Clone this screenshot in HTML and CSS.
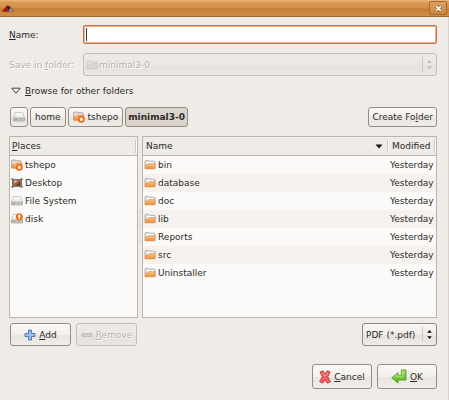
FILE: index.html
```html
<!DOCTYPE html>
<html lang="en">
<head>
<meta charset="utf-8">
<title>Save dialog</title>
<link rel="stylesheet" href="styles.css">
</head>
<body>
<svg class="defs" aria-hidden="true">
  <defs>
    <linearGradient id="orange" x1="0" y1="0" x2="0" y2="1"><stop offset="0" stop-color="#fcc590"/><stop offset="1" stop-color="#f28a2c"/></linearGradient>
    <linearGradient id="metal" x1="0" y1="0" x2="0" y2="1"><stop offset="0" stop-color="#fcfcfa"/><stop offset="1" stop-color="#e0e0db"/></linearGradient>
    <linearGradient id="green" x1="0" y1="0" x2="0" y2="1"><stop offset="0" stop-color="#a5e36a"/><stop offset="1" stop-color="#55ad1c"/></linearGradient>
    <symbol id="folder" viewBox="0 0 12 12">
      <path d="M1 9.500V2.500Q1 1.500 2 1.500H4.500L5.500 2.200H10Q11 2.200 11 3.200V9.500Z" fill="#e6e1dc" stroke="#aaa29b" stroke-width=".8"/>
      <path d="M2.500 3.500H10" stroke="#fff" stroke-width="1"/>
      <path d="M1 9.800L1.800 6H4.500L5.500 4.700H11.300L10.900 9.800Z" fill="url(#orange)" stroke="#dc9355" stroke-width=".7"/>
    </symbol>
    <symbol id="home" viewBox="0 0 12 12">
      <path d="M.6 8.500V2Q.6 1 1.600 1H4L5 1.700H9.500Q10.500 1.700 10.500 2.700V8.500Z" fill="#e6dbd2" stroke="#a8978b" stroke-width=".8"/>
      <path d="M.6 9.200L1.500 5.600H4L5 4.300H11L10.500 9.200Z" fill="url(#orange)" stroke="#d98743" stroke-width=".7"/>
      <circle cx="8.300" cy="8.200" r="3.500" fill="#f4690e"/>
      <path d="M6.300 8.300L8.300 6.300L10.300 8.300H9.600V9.700H7V8.300Z" fill="#fff"/>
    </symbol>
    <symbol id="drive" viewBox="0 0 12 12">
      <path d="M2.300 1.500H9.700L11.500 7V9.500H.5V7Z" fill="url(#metal)" stroke="#b7b7b2" stroke-width=".7"/>
      <path d="M.6 7H11.400V10H.6Z" fill="#d0d1cd" stroke="#9c9c97" stroke-width=".7"/>
      <path d="M2 8.500H4" stroke="#6fba3d" stroke-width="1"/>
      <path d="M6 8.500H10" stroke="#aaa" stroke-width=".7"/>
    </symbol>
    <symbol id="disk" viewBox="0 0 12 12">
      <use href="#drive"/>
      <circle cx="8.300" cy="3.700" r="3.500" fill="#f4690e"/>
      <path d="M8.300 1.300L10.300 3.500H9V6H7.600V3.500H6.300Z" fill="#fff"/>
    </symbol>
    <symbol id="desktop" viewBox="0 0 12 12">
      <path d="M1.500 2.500H10.500V9.500H1.500Z" fill="#8a6a5a" stroke="#77726e"/>
      <path d="M.3 1.200H2.500V3H.3ZM9.500 1.200H11.700V3H9.500ZM.3 9H2.500V10.800H.3ZM9.500 9H11.700V10.800H9.500Z" fill="#77736f"/>
      <path d="M3 3.500H9V8.500H3Z" fill="#a8633c"/>
      <path d="M3 3.500H7L3 6.500Z" fill="#e0c0a8"/>
      <path d="M5 8.500L9 5V8.500Z" fill="#6c2f1c"/>
    </symbol>
  </defs>
</svg>
<div class="dialog">
  <header class="titlebar">
    <svg class="logo" viewBox="0 0 12 7" aria-hidden="true"><path d="M0 6.500L5 .5L8 1.500L12 6.500Z" fill="#3a2019"/><path d="M.8 6.200L5 1.300L6.800 6.200Z" fill="#c90c0c"/><path d="M6.500 6.500L8.300 2.500L11.500 6.500Z" fill="#9599a2"/></svg>
    <button class="close" type="button" aria-label="Close"><svg viewBox="0 0 8 8" aria-hidden="true"><path d="M1.500 1.500L6.500 6.500M6.500 1.500L1.500 6.500" stroke="#79501f" stroke-width="3.400"/><path d="M1.500 1.500L6.500 6.500M6.500 1.500L1.500 6.500" stroke="#fff" stroke-width="2"/></svg></button>
  </header>
  <form class="content">
    <div class="fields">
      <label for="name"><u>N</u>ame:</label>
      <input id="name" class="name" type="text" autofocus>
      <label for="folder-select" class="off">Save in <u>f</u>older:</label>
      <div class="combo off">
        <svg class="lead" aria-hidden="true" viewBox="0 0 12 12"><path d="M1 9.500V2H5L6 3H11V9.500Z" fill="#e5e1dc" stroke="#c9c4be" stroke-width=".8"/><path d="M1 9.500L2 6H4.500L5.500 4.700H11.300L11 9.500Z" fill="#dad6d1" stroke="#c9c4be" stroke-width=".7"/></svg>
        <select id="folder-select" disabled><option>minimal3-0</option></select>
        <svg class="arrows" viewBox="0 0 6 10" aria-hidden="true"><path d="M1 3.500L3 1L5 3.500ZM1 6.500L3 9L5 6.500Z" fill="currentColor"/></svg>
      </div>
    </div>
    <button class="expander" type="button"><svg viewBox="0 0 10 8" aria-hidden="true"><path d="M.8 1.200H9.200L5 6.200Z" fill="#fff" stroke="#3f3d3b"/></svg><span><u>B</u>rowse for other folders</span></button>
    <nav class="path">
      <button class="btn drive" type="button" aria-label="File System"><svg class="icon" aria-hidden="true"><use href="#drive"/></svg></button>
      <button class="btn" type="button">home</button>
      <button class="btn" type="button"><svg class="icon" aria-hidden="true"><use href="#home"/></svg>tshepo</button>
      <button class="btn current" type="button">minimal3-0</button>
      <button class="btn create" type="button"><span>Create Fo<u>l</u>der</span></button>
    </nav>
    <div class="panes">
      <section class="pane places">
        <h2 class="head"><span><u>P</u>laces</span></h2>
        <ul>
          <li><svg class="icon" aria-hidden="true"><use href="#home"/></svg>tshepo</li>
          <li><svg class="icon" aria-hidden="true"><use href="#desktop"/></svg>Desktop</li>
          <li><svg class="icon" aria-hidden="true"><use href="#drive"/></svg>File System</li>
          <li><svg class="icon" aria-hidden="true"><use href="#disk"/></svg>disk</li>
        </ul>
      </section>
      <div class="grip"></div>
      <section class="pane files">
        <table>
          <thead><tr>
            <th scope="col"><div class="head sort">Name<svg viewBox="0 0 8 5" aria-hidden="true"><path d="M.5 .5H7.500L4 4.500Z" fill="#111"/></svg></div></th>
            <th scope="col" class="when"><div class="head">Modified</div></th>
          </tr></thead>
          <tbody>
            <tr><td><div class="cell"><svg class="icon" aria-hidden="true"><use href="#folder"/></svg>bin</div></td><td>Yesterday</td></tr>
            <tr><td><div class="cell"><svg class="icon" aria-hidden="true"><use href="#folder"/></svg>database</div></td><td>Yesterday</td></tr>
            <tr><td><div class="cell"><svg class="icon" aria-hidden="true"><use href="#folder"/></svg>doc</div></td><td>Yesterday</td></tr>
            <tr><td><div class="cell"><svg class="icon" aria-hidden="true"><use href="#folder"/></svg>lib</div></td><td>Yesterday</td></tr>
            <tr><td><div class="cell"><svg class="icon" aria-hidden="true"><use href="#folder"/></svg>Reports</div></td><td>Yesterday</td></tr>
            <tr><td><div class="cell"><svg class="icon" aria-hidden="true"><use href="#folder"/></svg>src</div></td><td>Yesterday</td></tr>
            <tr><td><div class="cell"><svg class="icon" aria-hidden="true"><use href="#folder"/></svg>Uninstaller</div></td><td>Yesterday</td></tr>
          </tbody>
        </table>
      </section>
    </div>
    <div class="tools">
      <button class="btn" type="button"><svg class="icon" viewBox="0 0 12 12" aria-hidden="true"><path d="M4.500 1H7.500V4.500H11V7.500H7.500V11H4.500V7.500H1V4.500H4.500Z" fill="#9dc0e6" stroke="#4a7ab4" stroke-linejoin="round"/></svg><span><u>A</u>dd</span></button>
      <button class="btn off" type="button" disabled><svg class="icon" viewBox="0 0 12 12" aria-hidden="true"><path d="M1 4.500H11V7.500H1Z" fill="#d3cfca" stroke="#bdb8b2" stroke-width=".8"/></svg><span><u>R</u>emove</span></button>
      <div class="combo type">
        <select aria-label="File type"><option>PDF (*.pdf)</option></select>
        <svg class="arrows" viewBox="0 0 6 10" aria-hidden="true"><path d="M1 3.500L3 1L5 3.500ZM1 6.500L3 9L5 6.500Z" fill="currentColor"/></svg>
      </div>
    </div>
    <div class="actions">
      <button class="btn" type="button"><svg class="cross" viewBox="0 0 12 14" aria-hidden="true"><path d="M1 2L4 .8L6 3.800L8.300 .8L11.200 2L8.800 6.800L11.500 11.800L8.300 13.200L6 10L3.500 13.200L.6 11.500L3.300 6.800Z" fill="#ee5f5f" stroke="#c23a3c" stroke-linejoin="round" stroke-width=".9"/><path d="M3 2.500L6 6L9 2.500" fill="none" stroke="#fba8a4" stroke-width=".8"/></svg><span><u>C</u>ancel</span></button>
      <button class="btn" type="submit"><svg class="enter" viewBox="0 0 16 15" aria-hidden="true"><path d="M10.300 1H15V11H7V14L.8 8.900L7 3.800V6.800H10.300Z" fill="url(#green)" stroke="#4d9a1c" stroke-linejoin="round" stroke-width=".9"/><path d="M11.300 2V7.800H6.200V5.700L2.500 8.900" fill="none" stroke="#c4f09a" stroke-width=".7"/></svg><span><u>O</u>K</span></button>
    </div>
  </form>
</div>
</body>
</html>
```
FILE: styles.css
```css
* { box-sizing: border-box; }

body {
  margin: 0;
  background: #efebe6;
  color: #2c2a28;
  font: 9px/12px "DejaVu Sans", sans-serif;
}

.defs { position: absolute; width: 0; height: 0; }

svg { display: block; flex: none; fill: none; }

button, input, select { font: inherit; color: inherit; margin: 0; }

u { text-decoration-thickness: 1px; text-underline-offset: 1px; }

.dialog { min-height: 100vh; border-right: 1px solid #d9d3cb; }

.titlebar {
  display: flex;
  align-items: center;
  justify-content: space-between;
  height: 17px;
  padding: 0 2px;
  background: linear-gradient(#efb87c, #dd9b58 15%, #d58d46 50%, #c67e36 55%, #d08b46);
  border-bottom: 1px solid #98682f;
  margin-right: -1px;
}

.logo { width: 12px; height: 7px; }

.close {
  display: grid;
  place-items: center;
  width: 18px;
  height: 14px;
  padding: 0;
  border: 1px solid #a06b32;
  border-radius: 2px;
  background: linear-gradient(#dca364, #c98440);
}

.close svg { width: 7px; height: 7px; }

.content { padding: 8px 11px 10px 9px; }

.fields {
  display: grid;
  grid-template-columns: 68px 1fr;
  align-items: center;
  gap: 9px 6px;
}

.name {
  width: 100%;
  height: 19px;
  padding: 0 2px;
  border: 1px solid #c2714a;
  border-radius: 2px;
  background: #fff;
  box-shadow: inset 0 0 0 1px #eab08c;
  outline: none;
  caret-color: transparent;
}

.name:not(:valid), .name {
  background: linear-gradient(#333, #333) no-repeat 2px center / 1px 13px, #fff;
}

.combo {
  display: flex;
  align-items: center;
  height: 23px;
  border: 1px solid #8f867e;
  border-radius: 3px;
  background: linear-gradient(#faf8f6, #f0edea 50%, #e6e2dd 55%, #efebe7);
  position: relative;
}

.combo select {
  flex: 1;
  min-width: 0;
  height: 100%;
  padding: 0 16px 0 3px;
  border: 0;
  background: none;
  appearance: none;
  opacity: 1;
}

.combo .lead { width: 12px; height: 12px; margin-left: 2px; }
.combo .lead + select { padding-left: 1px; }

.arrows {
  position: absolute;
  right: 0;
  top: 3px;
  width: 14px;
  height: 15px;
  padding: 2px 3px;
  border-left: 1px solid #cfc8c1;
  pointer-events: none;
}

.type .arrows { color: #000; }

.off, .off select { color: #b9b3ac; text-shadow: 1px 1px #fff; }

.combo.off, .btn.off {
  border-color: #c5beb7;
  background: linear-gradient(#eeebe7, #ebe7e3 50%, #e5e1dc 55%, #eae6e1);
}

.expander {
  display: flex;
  align-items: center;
  gap: 4px;
  margin: 9px 0 10px;
  padding: 0 0 0 2px;
  border: 0;
  background: none;
}

.expander svg { width: 10px; height: 8px; }

.path { display: flex; gap: 2px; padding-left: 1px; }

.btn {
  display: flex;
  align-items: center;
  justify-content: center;
  gap: 3px;
  height: 20px;
  padding: 0 4px;
  border: 1px solid #958c84;
  border-radius: 3px;
  background: linear-gradient(#fbf9f7, #f2efec 50%, #e9e5e1 55%, #f0ece8);
  white-space: nowrap;
}

.path .drive { padding: 0 2px; }
.path .current { padding: 0 2px; background: #d9d3cb; font-weight: bold; }
.path .create { margin-left: auto; padding: 0 3px; }

.icon { width: 12px; height: 12px; }

.panes {
  display: grid;
  grid-template-columns: 129px 4px 1fr;
  min-height: 182px;
  margin-top: 9px;
}

.pane { border: 1px solid #beb2aa; background: #fbfaf8; }

.grip {
  align-self: center;
  height: 34px;
  margin: 0 1px;
  background: repeating-linear-gradient(#d9d4ce 0 1px, #f4f1ed 1px 2px);
}

.head {
  display: flex;
  align-items: center;
  height: 19px;
  margin: 0;
  padding: 0 2px;
  border-bottom: 1px solid #beb2aa;
  background: linear-gradient(to left, #fff 1px, #cfc8c1 1px 2px, transparent 2px) no-repeat 0 3px / 100% 13px, #efebe6;
  font-size: 9px;
  font-weight: normal;
}

.sort { justify-content: space-between; padding: 0 6px 0 3px; }
.sort svg { width: 8px; height: 5px; }

ul { margin: 0; padding: 0; list-style: none; }

li, .cell { display: flex; align-items: center; gap: 2px; height: 18px; padding-left: 1px; }

table { width: 100%; border-collapse: collapse; }
th, td { padding: 0; text-align: left; font-weight: normal; }
td + td { padding-left: 1px; }
.when { width: 47px; }
.when .head { padding-left: 3px; }
tbody tr:nth-child(even) { background: #f5f2ed; }

.tools, .actions { display: flex; gap: 5px; padding-left: 1px; }
.tools { margin-top: 5px; }
.tools .btn { width: 61px; height: 23px; }
.tools .type { width: 75px; margin-left: auto; }

.actions { justify-content: flex-end; margin-top: 18px; }
.actions .btn { width: 60px; height: 25px; }

.cross { width: 12px; height: 14px; }
.enter { width: 16px; height: 15px; }
```
